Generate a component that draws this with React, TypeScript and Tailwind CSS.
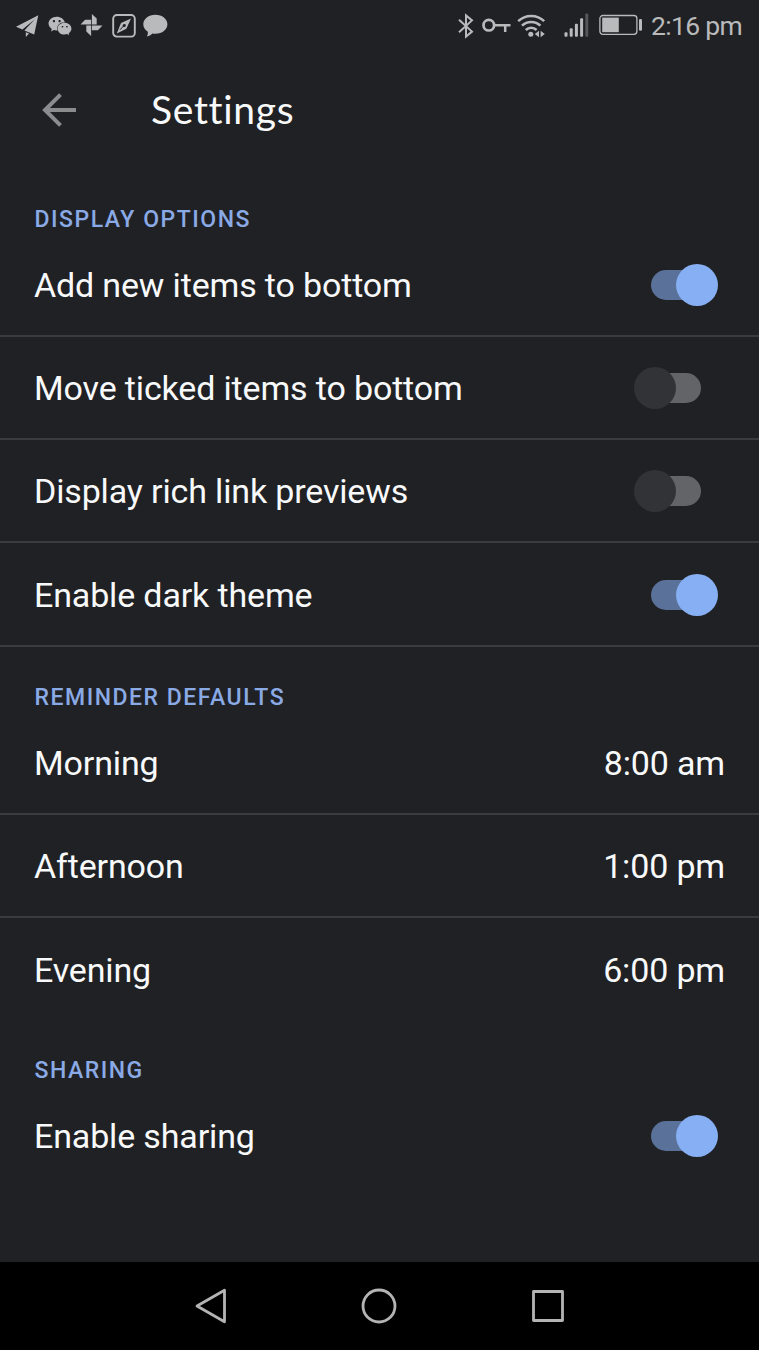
import { useState } from 'react'
import { FaWeixin } from 'react-icons/fa'

interface ToggleRow {
  key: string
  label: string
}

interface ReminderRow {
  label: string
  time: string
}

const displayOptions: ToggleRow[] = [
  { key: 'addToBottom', label: 'Add new items to bottom' },
  { key: 'moveTicked', label: 'Move ticked items to bottom' },
  { key: 'linkPreviews', label: 'Display rich link previews' },
  { key: 'darkTheme', label: 'Enable dark theme' },
]

const reminders: ReminderRow[] = [
  { label: 'Morning', time: '8:00 am' },
  { label: 'Afternoon', time: '1:00 pm' },
  { label: 'Evening', time: '6:00 pm' },
]

function StatusBar() {
  return (
    <div className="flex h-[52px] items-center justify-between pl-4 pr-[17px] text-[#b9babb]">
      <div className="flex items-center">
        <svg width="23" height="24" viewBox="0 0 23 24" fill="currentColor">
          <path d="M22.3 1.2 0 12.8 6.4 15.4 18.6 5.4 8.4 16.4 18.2 20.6z" />
          <path d="M9.8 18.2v4.8l3.3-3.4z" />
        </svg>
        <FaWeixin className="ml-[9px] h-6 w-6" />
        <svg className="ml-[8px]" width="23" height="24" viewBox="-11.5 -11 23 24" fill="currentColor">
          <path d="M.4-11 5.2-6.4V-.4H.4z" />
          <path d="M11 .4 6.4 5.2H.4V.4z" />
          <path d="M-.4 11-5.2 6.4V.4H-.4z" />
          <path d="M-11-.4-6.4-5.2H-.4V-.4z" />
        </svg>
        <svg className="ml-[8.5px]" width="24" height="24" viewBox="0 0 24 24" fill="none" stroke="currentColor">
          <rect x="1.2" y="1" width="21.6" height="21.6" rx="3.6" strokeWidth="1.9" />
          <path d="M19 4.4 14.4 14.8 4.8 19.4 9 9z" fill="currentColor" stroke="none" />
          <path d="M13.2 10.2 8 15.8" stroke="#202124" strokeWidth="1" />
          <circle cx="12.2" cy="11.6" r="1.5" fill="#202124" stroke="none" />
        </svg>
        <svg className="ml-[7.5px]" width="25" height="24" viewBox="0 0 25 24" fill="currentColor">
          <path d="M12.4.8C19.2.8 24.4 5 24.4 10.3S19.2 19.8 12.4 19.8c-1 0-2-.1-3-.3-1.4 1.5-3.2 2.7-5.5 2.9.8-1.3 1.1-2.8.9-4.6C2 16 .3 13.4.3 10.3.3 5 5.6.8 12.4.8z" />
        </svg>
      </div>

      <div className="flex items-center">
        <svg width="16" height="26" viewBox="0 0 16 26" fill="none" stroke="currentColor" strokeWidth="2">
          <path d="M1 6.8 14 18.6 8 23.6V2.4L14 7.4 1 19.2" />
        </svg>
        <svg className="ml-[8px]" width="29" height="26" viewBox="0 0 29 26" fill="none" stroke="currentColor">
          <circle cx="6.8" cy="12.2" r="5.3" strokeWidth="2.7" />
          <path d="M12 12.2H28.5M23.2 12.2v6.8" strokeWidth="2.5" />
        </svg>
        <svg className="ml-[6px]" width="29" height="26" viewBox="0 0 29 26" fill="none" stroke="currentColor">
          <path d="M1.2 8.2a18.6 18.6 0 0 1 26 0" strokeWidth="2.5" />
          <path d="M5 12.7a13.2 13.2 0 0 1 18.4 0" strokeWidth="2.5" />
          <path d="M8.8 17a7.8 7.8 0 0 1 10.8 0" strokeWidth="2.5" />
          <circle cx="13.8" cy="21.2" r="2.5" fill="currentColor" stroke="none" />
          <path d="M22 17.8v6.4l-4.2-3.2zM23.6 17.8v6.4l4.2-3.2z" fill="currentColor" stroke="none" />
        </svg>
        <svg className="ml-[18px]" width="25" height="26" viewBox="0 0 25 26" fill="currentColor">
          <rect x="0.5" y="19.2" width="3" height="4.6" rx="1" />
          <rect x="5.7" y="15.3" width="3" height="8.5" rx="1" />
          <rect x="10.9" y="10.8" width="3" height="13" rx="1" />
          <rect x="16.1" y="5.2" width="3" height="18.6" rx="1" />
          <rect x="21.3" y="0.5" width="3" height="23.3" rx="1" fill="#55565a" />
        </svg>
        <svg className="ml-[10px]" width="44" height="26" viewBox="0 0 44 26" fill="none" stroke="currentColor">
          <rect x="0.9" y="2.5" width="37" height="18.8" rx="3" strokeWidth="1.3" />
          <rect x="3.2" y="4.6" width="16.6" height="14.6" fill="currentColor" stroke="none" />
          <rect x="40" y="6" width="3" height="11.8" rx="1.2" fill="currentColor" stroke="none" />
        </svg>
        <span className="ml-[8px] text-[26.5px] leading-none tracking-[-0.7px]">2:16 pm</span>
      </div>
    </div>
  )
}

function Toggle({ on, onChange }: { on: boolean; onChange: () => void }) {
  return (
    <button
      role="switch"
      aria-checked={on}
      onClick={onChange}
      className={`flex h-[42px] w-[67px] items-center ${on ? 'mr-[7px] justify-end' : 'mr-6 justify-start'}`}
    >
      <span
        className={`flex h-[30px] w-[50px] items-center rounded-full ${
          on ? 'mr-auto justify-end bg-[#5a7199]' : 'ml-auto justify-start bg-[#636467]'
        }`}
      >
        <span
          className={`h-[42px] w-[42px] shrink-0 rounded-full ${
            on ? '-mr-[17px] bg-[#87aff3]' : '-ml-[17px] bg-[#323337]'
          }`}
        />
      </span>
    </button>
  )
}

function SectionTitle({ children }: { children: string }) {
  return (
    <h2 className="h-[29px] pl-[34.5px] text-[23px] font-medium leading-[29px] tracking-[1.52px] text-[#8aaae6]">
      {children}
    </h2>
  )
}

function Row({ label, divider = true, children }: { label: string; divider?: boolean; children: React.ReactNode }) {
  return (
    <div
      className={`flex h-[103.33px] items-center justify-between border-b-2 px-[34px] pt-px ${
        divider ? 'border-[#3a3b3e]' : 'border-transparent'
      }`}
    >
      <span className="text-[34px] leading-10 tracking-[-0.15px]">{label}</span>
      {children}
    </div>
  )
}

export default function App() {
  const [settings, setSettings] = useState<Record<string, boolean>>({
    addToBottom: true,
    moveTicked: false,
    linkPreviews: false,
    darkTheme: true,
    sharing: true,
  })

  const toggle = (key: string) => setSettings((prev) => ({ ...prev, [key]: !prev[key] }))

  return (
    <div className="flex h-[1350px] w-[759px] flex-col overflow-hidden bg-[#202124] font-['Roboto',sans-serif] text-[#f8f9fa]">
      <StatusBar />

      <header className="flex h-[116px] items-center pl-[41px]">
        <button aria-label="Back" className="text-[#8b8c8d]">
          <svg width="36" height="36" viewBox="0 0 36 36" fill="none" stroke="currentColor" strokeWidth="4">
            <path d="M35 18H4M19.5 2.6 4 18 19.5 33.4" />
          </svg>
        </button>
        <h1 className="-mt-0.5 ml-[74px] font-['Lato',sans-serif] text-[39px] leading-none tracking-[0.7px]">
          Settings
        </h1>
      </header>

      <main className="flex-1">
        <section className="pt-[36.5px]">
          <SectionTitle>DISPLAY OPTIONS</SectionTitle>
          {displayOptions.map((item) => (
            <Row key={item.key} label={item.label}>
              <Toggle on={settings[item.key]} onChange={() => toggle(item.key)} />
            </Row>
          ))}
        </section>

        <section className="pt-9">
          <SectionTitle>REMINDER DEFAULTS</SectionTitle>
          {reminders.map((item, i) => (
            <Row key={item.label} label={item.label} divider={i < reminders.length - 1}>
              <span className="text-[34px] leading-10 tracking-[-0.15px]">{item.time}</span>
            </Row>
          ))}
        </section>

        <section className="pt-[34px]">
          <SectionTitle>SHARING</SectionTitle>
          <Row label="Enable sharing" divider={false}>
            <Toggle on={settings.sharing} onChange={() => toggle('sharing')} />
          </Row>
        </section>
      </main>

      <nav className="flex h-[88px] items-center justify-between bg-black pl-[194px] pr-[193px] text-[#b4b4b4]">
        <svg width="34" height="36" viewBox="0 0 34 36" fill="none" stroke="currentColor" strokeWidth="2.8" strokeLinejoin="round">
          <path d="M30.5 2.2v31.6L3 18z" />
        </svg>
        <svg width="36" height="36" viewBox="0 0 36 36" fill="none" stroke="currentColor" strokeWidth="2.8">
          <circle cx="18" cy="18" r="16" />
        </svg>
        <svg width="36" height="36" viewBox="0 0 36 36" fill="none" stroke="currentColor" strokeWidth="2.8" strokeLinejoin="round">
          <rect x="3.5" y="3.5" width="29" height="29" />
        </svg>
      </nav>
    </div>
  )
}
